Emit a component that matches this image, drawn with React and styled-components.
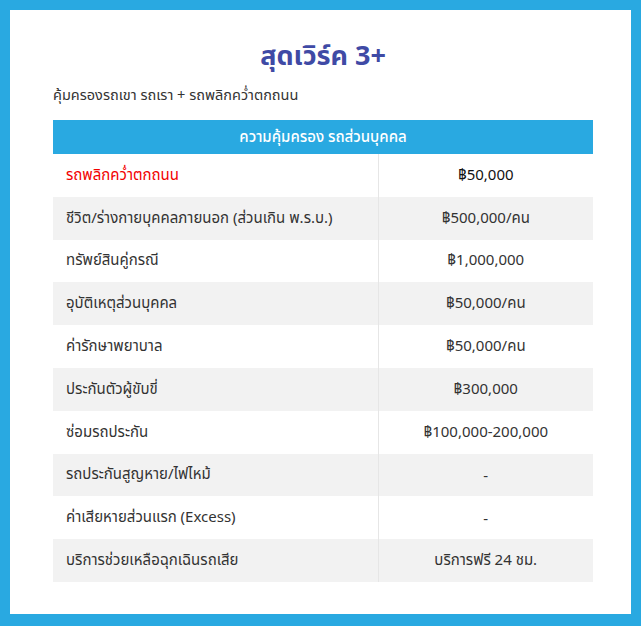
import React from "react";
import styled, { createGlobalStyle } from "styled-components";

const Global = createGlobalStyle`
  html, body { margin: 0; padding: 0; background: #29a9e1; }
  body { font-family: Tahoma, "Noto Sans", "Noto Sans Thai", "DejaVu Sans", sans-serif; }
`;

const Frame = styled.div`
  box-sizing: border-box;
  width: 641px;
  height: 626px;
  padding: 10px 10px 12px 10px;
  background: #29a9e1;
`;

const Panel = styled.div`
  background: #ffffff;
  height: 100%;
  box-sizing: border-box;
  padding: 28px 38px 0 43px;
`;

const Title = styled.h1`
  margin: 0;
  text-align: center;
  font-size: 27px;
  font-weight: 700;
  color: #3f4aa5;
  line-height: 34px;
`;

const Subtitle = styled.p`
  margin: 12px 0 0 0;
  font-size: 14.5px;
  color: #333;
  line-height: 20px;
`;

const Table = styled.table`
  margin-top: 16px;
  width: 540px;
  border-collapse: collapse;
  font-size: 15px;
  color: #333;
  table-layout: fixed;
`;

const Col = styled.col`
  width: ${(p) => p.$w}px;
`;

const HeadCell = styled.th`
  background: #29a9e1;
  color: #fff;
  font-weight: 500;
  height: 34px;
  padding: 0;
  text-align: center;
`;

const Row = styled.tr`
  background: ${(p) => (p.$alt ? "#f2f2f2" : "#ffffff")};
`;

const Label = styled.td`
  height: 42.8px;
  padding: 0 0 0 13px;
  color: ${(p) => (p.$red ? "#f20000" : "#333")};
  border-right: 1px solid #e6e6e6;
  white-space: nowrap;
`;

const Value = styled.td`
  padding: 0;
  text-align: center;
  color: ${(p) => (p.$strong ? "#111" : "#333")};
`;

const rows = [
  ["รถพลิกคว่ำตกถนน", "฿50,000", true],
  ["ชีวิต/ร่างกายบุคคลภายนอก (ส่วนเกิน พ.ร.บ.)", "฿500,000/คน"],
  ["ทรัพย์สินคู่กรณี", "฿1,000,000"],
  ["อุบัติเหตุส่วนบุคคล", "฿50,000/คน"],
  ["ค่ารักษาพยาบาล", "฿50,000/คน"],
  ["ประกันตัวผู้ขับขี่", "฿300,000"],
  ["ซ่อมรถประกัน", "฿100,000-200,000"],
  ["รถประกันสูญหาย/ไฟไหม้", "-"],
  ["ค่าเสียหายส่วนแรก (Excess)", "-"],
  ["บริการช่วยเหลือฉุกเฉินรถเสีย", "บริการฟรี 24 ชม."],
];

export default function App() {
  return (
    <Frame>
      <Global />
      <Panel>
        <Title>สุดเวิร์ค 3+</Title>
        <Subtitle>คุ้มครองรถเขา รถเรา + รถพลิกคว่ำตกถนน</Subtitle>
        <Table>
          <colgroup>
            <Col $w={325} />
            <Col $w={215} />
          </colgroup>
          <thead>
            <tr>
              <HeadCell colSpan={2}>ความคุ้มครอง รถส่วนบุคคล</HeadCell>
            </tr>
          </thead>
          <tbody>
            {rows.map(([l, v, first], i) => (
              <Row key={i} $alt={i % 2 === 1}>
                <Label $red={first}>{l}</Label>
                <Value $strong={first}>{v}</Value>
              </Row>
            ))}
          </tbody>
        </Table>
      </Panel>
    </Frame>
  );
}
